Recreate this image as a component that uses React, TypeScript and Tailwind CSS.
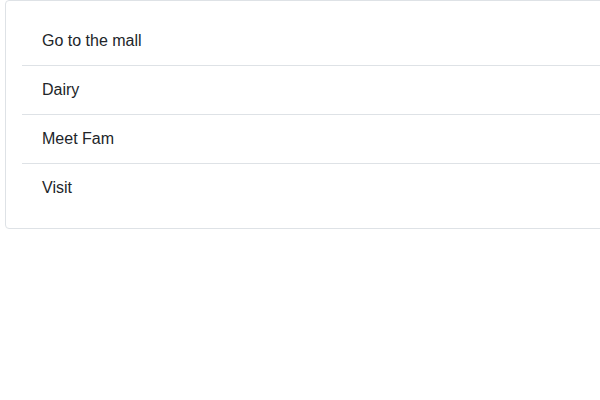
const items = ["Go to the mall", "Dairy", "Meet Fam", "Visit"];

const App = () => {
    return (
        <div className="w-[600px] h-[400px] overflow-hidden bg-white font-['Liberation_Sans',Arial,sans-serif]">
            <div className="ml-[5px] w-[700px] rounded border border-[#dee2e6] p-4">
                <ul>
                    {items.map((item, i) => (
                        <li
                            key={item}
                            className={`py-3 pl-5 text-base leading-6 text-[#212529] ${
                                i < items.length - 1 ? "border-b border-[#dee2e6]" : ""
                            }`}
                        >
                            {item}
                        </li>
                    ))}
                </ul>
            </div>
        </div>
    );
};

export default App;
